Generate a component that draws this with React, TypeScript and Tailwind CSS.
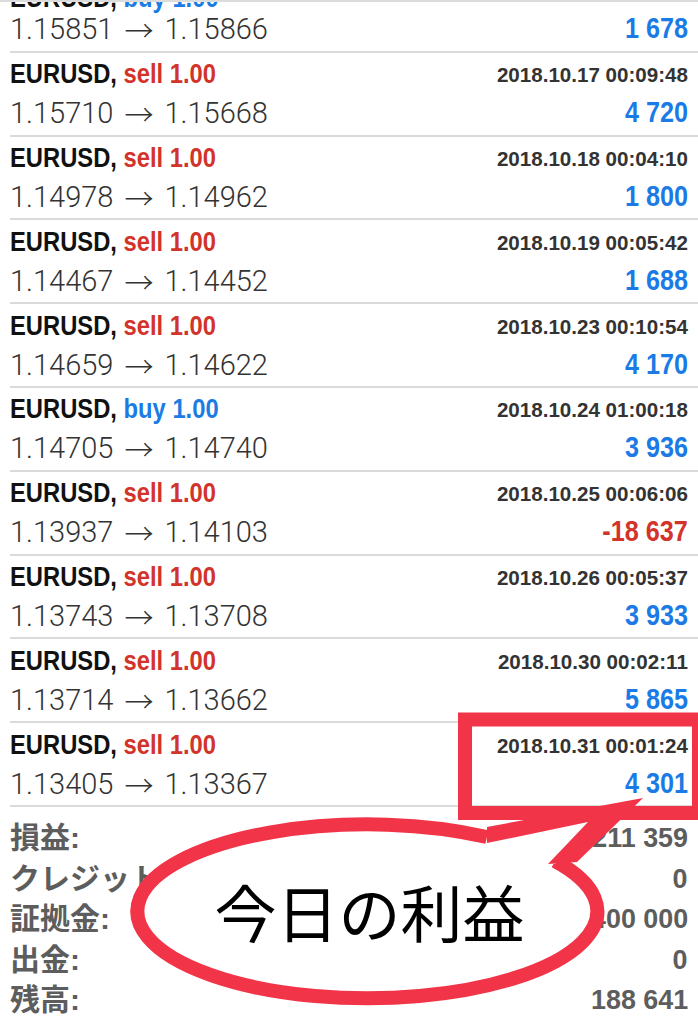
import React from "react";

type Deal = {
    side: "buy" | "sell";
    date: string;
    from: string;
    to: string;
    profit: string;
};

const deals: Deal[] = [
    { side: "buy", date: "", from: "1.15851", to: "1.15866", profit: "1 678" },
    { side: "sell", date: "2018.10.17 00:09:48", from: "1.15710", to: "1.15668", profit: "4 720" },
    { side: "sell", date: "2018.10.18 00:04:10", from: "1.14978", to: "1.14962", profit: "1 800" },
    { side: "sell", date: "2018.10.19 00:05:42", from: "1.14467", to: "1.14452", profit: "1 688" },
    { side: "sell", date: "2018.10.23 00:10:54", from: "1.14659", to: "1.14622", profit: "4 170" },
    { side: "buy", date: "2018.10.24 01:00:18", from: "1.14705", to: "1.14740", profit: "3 936" },
    { side: "sell", date: "2018.10.25 00:06:06", from: "1.13937", to: "1.14103", profit: "-18 637" },
    { side: "sell", date: "2018.10.26 00:05:37", from: "1.13743", to: "1.13708", profit: "3 933" },
    { side: "sell", date: "2018.10.30 00:02:11", from: "1.13714", to: "1.13662", profit: "5 865" },
    { side: "sell", date: "2018.10.31 00:01:24", from: "1.13405", to: "1.13367", profit: "4 301" },
];

const summary = [
    { label: "損益:", value: "-211 359" },
    { label: "クレジット:", value: "0" },
    { label: "証拠金:", value: "400 000" },
    { label: "出金:", value: "0" },
    { label: "残高:", value: "188 641" },
];

function classNames(...classes: (string | false | undefined)[]) {
    return classes.filter(Boolean).join(" ");
}

const Row = ({ deal, first }: { deal: Deal; first?: boolean }) => {
    const loss = deal.profit.startsWith("-");
    return (
        <div className="ml-[10px] pr-[10px] h-[83.8px] border-b-2 border-[#dadada] flex flex-col">
            <div className={classNames("h-[44px] flex justify-between items-center", first && "translate-y-[8px]")}>
                <span className="inline-block origin-left scale-x-[0.88] text-[27px] font-bold leading-none whitespace-nowrap">
                    <span className="text-[#111]">EURUSD, </span>
                    <span className={deal.side === "buy" ? "text-[#1b7de4]" : "text-[#d2332b]"}>
                        {deal.side} 1.00
                    </span>
                </span>
                <span className="inline-block origin-right scale-x-[0.98] text-[21px] font-bold leading-none text-[#333] whitespace-nowrap">
                    {deal.date}
                </span>
            </div>
            <div className="h-[38px] flex justify-between items-center">
                <span className="mb-[4px] flex items-center font-['Roboto','Liberation_Sans',sans-serif] font-light text-[29px] leading-none text-[#333] whitespace-nowrap">
                    <span>{deal.from}</span>
                    <span className="mx-[11px] font-['Noto_Sans_CJK_JP',sans-serif] font-light">→</span>
                    <span>{deal.to}</span>
                </span>
                <span
                    className={classNames(
                        "inline-block mb-[7px] origin-right scale-x-[0.84] text-[30px] font-bold leading-none whitespace-nowrap",
                        loss ? "text-[#d2332b]" : "text-[#1b7be6]"
                    )}
                >
                    {deal.profit}
                </span>
            </div>
        </div>
    );
};

const App = () => {
    return (
        <div className="relative w-[698px] h-[1024px] overflow-hidden bg-white border-t-2 border-[#dcdcdc] font-['Liberation_Sans','Noto_Sans_CJK_JP',sans-serif]">
            <div className="-mt-[33px]">
                {deals.map((d, i) => (
                    <Row key={i} deal={d} first={i === 0} />
                ))}
            </div>

            <div className="pt-[11px]">
                {summary.map((s) => (
                    <div key={s.label} className="ml-[10px] pr-[10px] h-[40.5px] flex justify-between items-center">
                        <span className="text-[30px] font-bold leading-none text-[#5d5d5d] whitespace-nowrap">
                            {s.label}
                        </span>
                        <span className="inline-block origin-right scale-x-[0.96] text-[28px] font-bold leading-none text-[#5d5d5d] whitespace-nowrap">
                            {s.value}
                        </span>
                    </div>
                ))}
            </div>

            {/* annotation drawn over the screenshot */}
            <svg
                className="absolute inset-0 w-[698px] h-[1024px] pointer-events-none"
                viewBox="0 0 698 1024"
            >
                <rect x="465" y="717.5" width="234" height="93.5" fill="none" stroke="#f23448" strokeWidth="14" />
                <path
                    d="M 487 835 A 230 87 0 1 0 555 859"
                    fill="#ffffff"
                    stroke="#f23448"
                    strokeWidth="14"
                />
                <polygon points="487,835 600,815 555,862" fill="#ffffff" />
                <polygon points="487,825 643,796 577,860 548,862 588,820 487,841" fill="#f23448" />
            </svg>
            <div className="absolute left-[132px] top-[815px] w-[475px] h-[188px] flex items-center justify-center">
                <span className="font-['Noto_Sans_CJK_JP',sans-serif] text-[62px] font-normal leading-none text-black">
                    今日の利益
                </span>
            </div>
        </div>
    );
};

export default App;
